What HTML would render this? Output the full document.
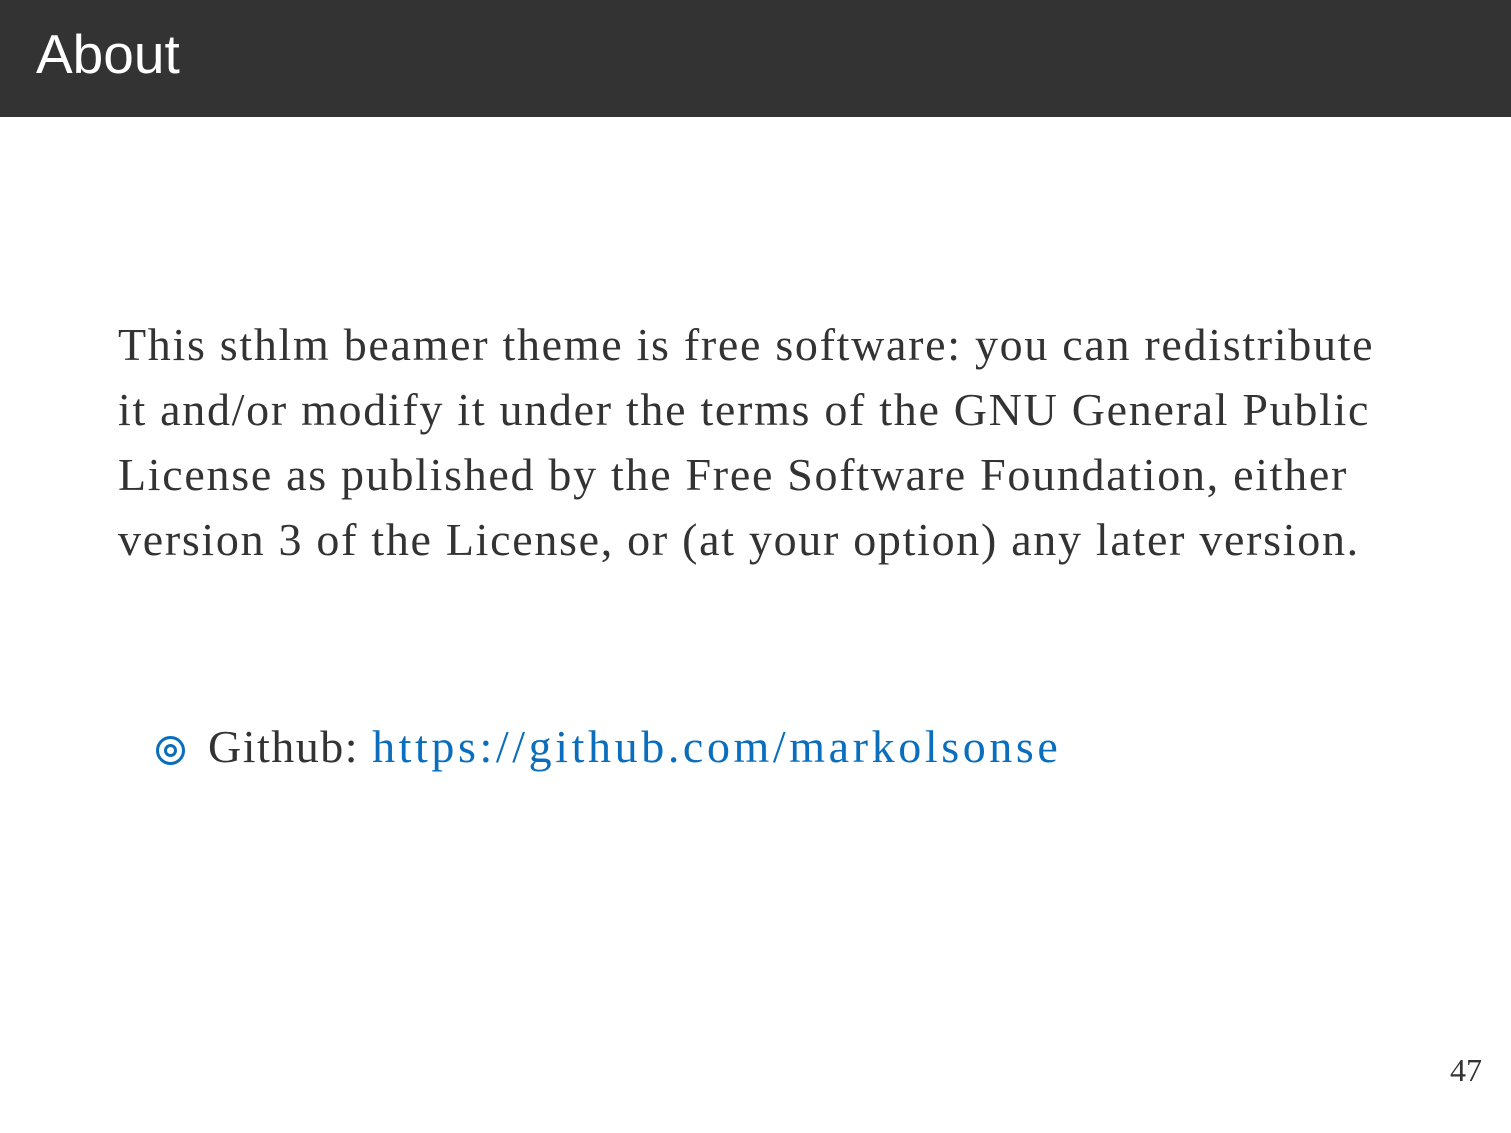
<!DOCTYPE html>
<html><head><style>
body{margin:0;width:1511px;height:1133px;background:#fff;position:relative;overflow:hidden;font-family:"Liberation Serif",serif;color:#333}
.hdr{position:absolute;left:0;top:0;width:1511px;height:117px;background:#333}
.hdr span{position:absolute;left:36px;top:22px;font-family:"Liberation Sans",sans-serif;font-size:55px;color:#fff}
.p{position:absolute;left:118px;top:312px;font-size:46px;line-height:65px;white-space:nowrap;letter-spacing:1.7px}
.g{position:absolute;left:208px;top:720px;font-size:46px;white-space:nowrap;line-height:54px;letter-spacing:1.5px}
.g a{color:#0a6ebd;text-decoration:none;letter-spacing:3.6px}
.b{position:absolute;left:156px;top:736px;width:29px;height:29px;border:3px solid #0a6ebd;border-radius:50%;box-sizing:border-box}
.b::after{content:"";position:absolute;left:5px;top:5px;width:13px;height:13px;border:3px solid #0a6ebd;border-radius:50%;box-sizing:border-box}
.n{position:absolute;right:29px;top:1052px;font-size:32px}
</style></head><body>
<div class="hdr"><span>About</span></div>
<div class="p">This sthlm beamer theme is free software: you can redistribute<br>it and/or modify it under the terms of the GNU General Public<br>License as published by the Free Software Foundation, either<br>version 3 of the License, or (at your option) any later version.</div>
<div class="b"></div>
<div class="g">Github: <a>https://github.com/markolsonse</a></div>
<div class="n">47</div>
</body></html>
